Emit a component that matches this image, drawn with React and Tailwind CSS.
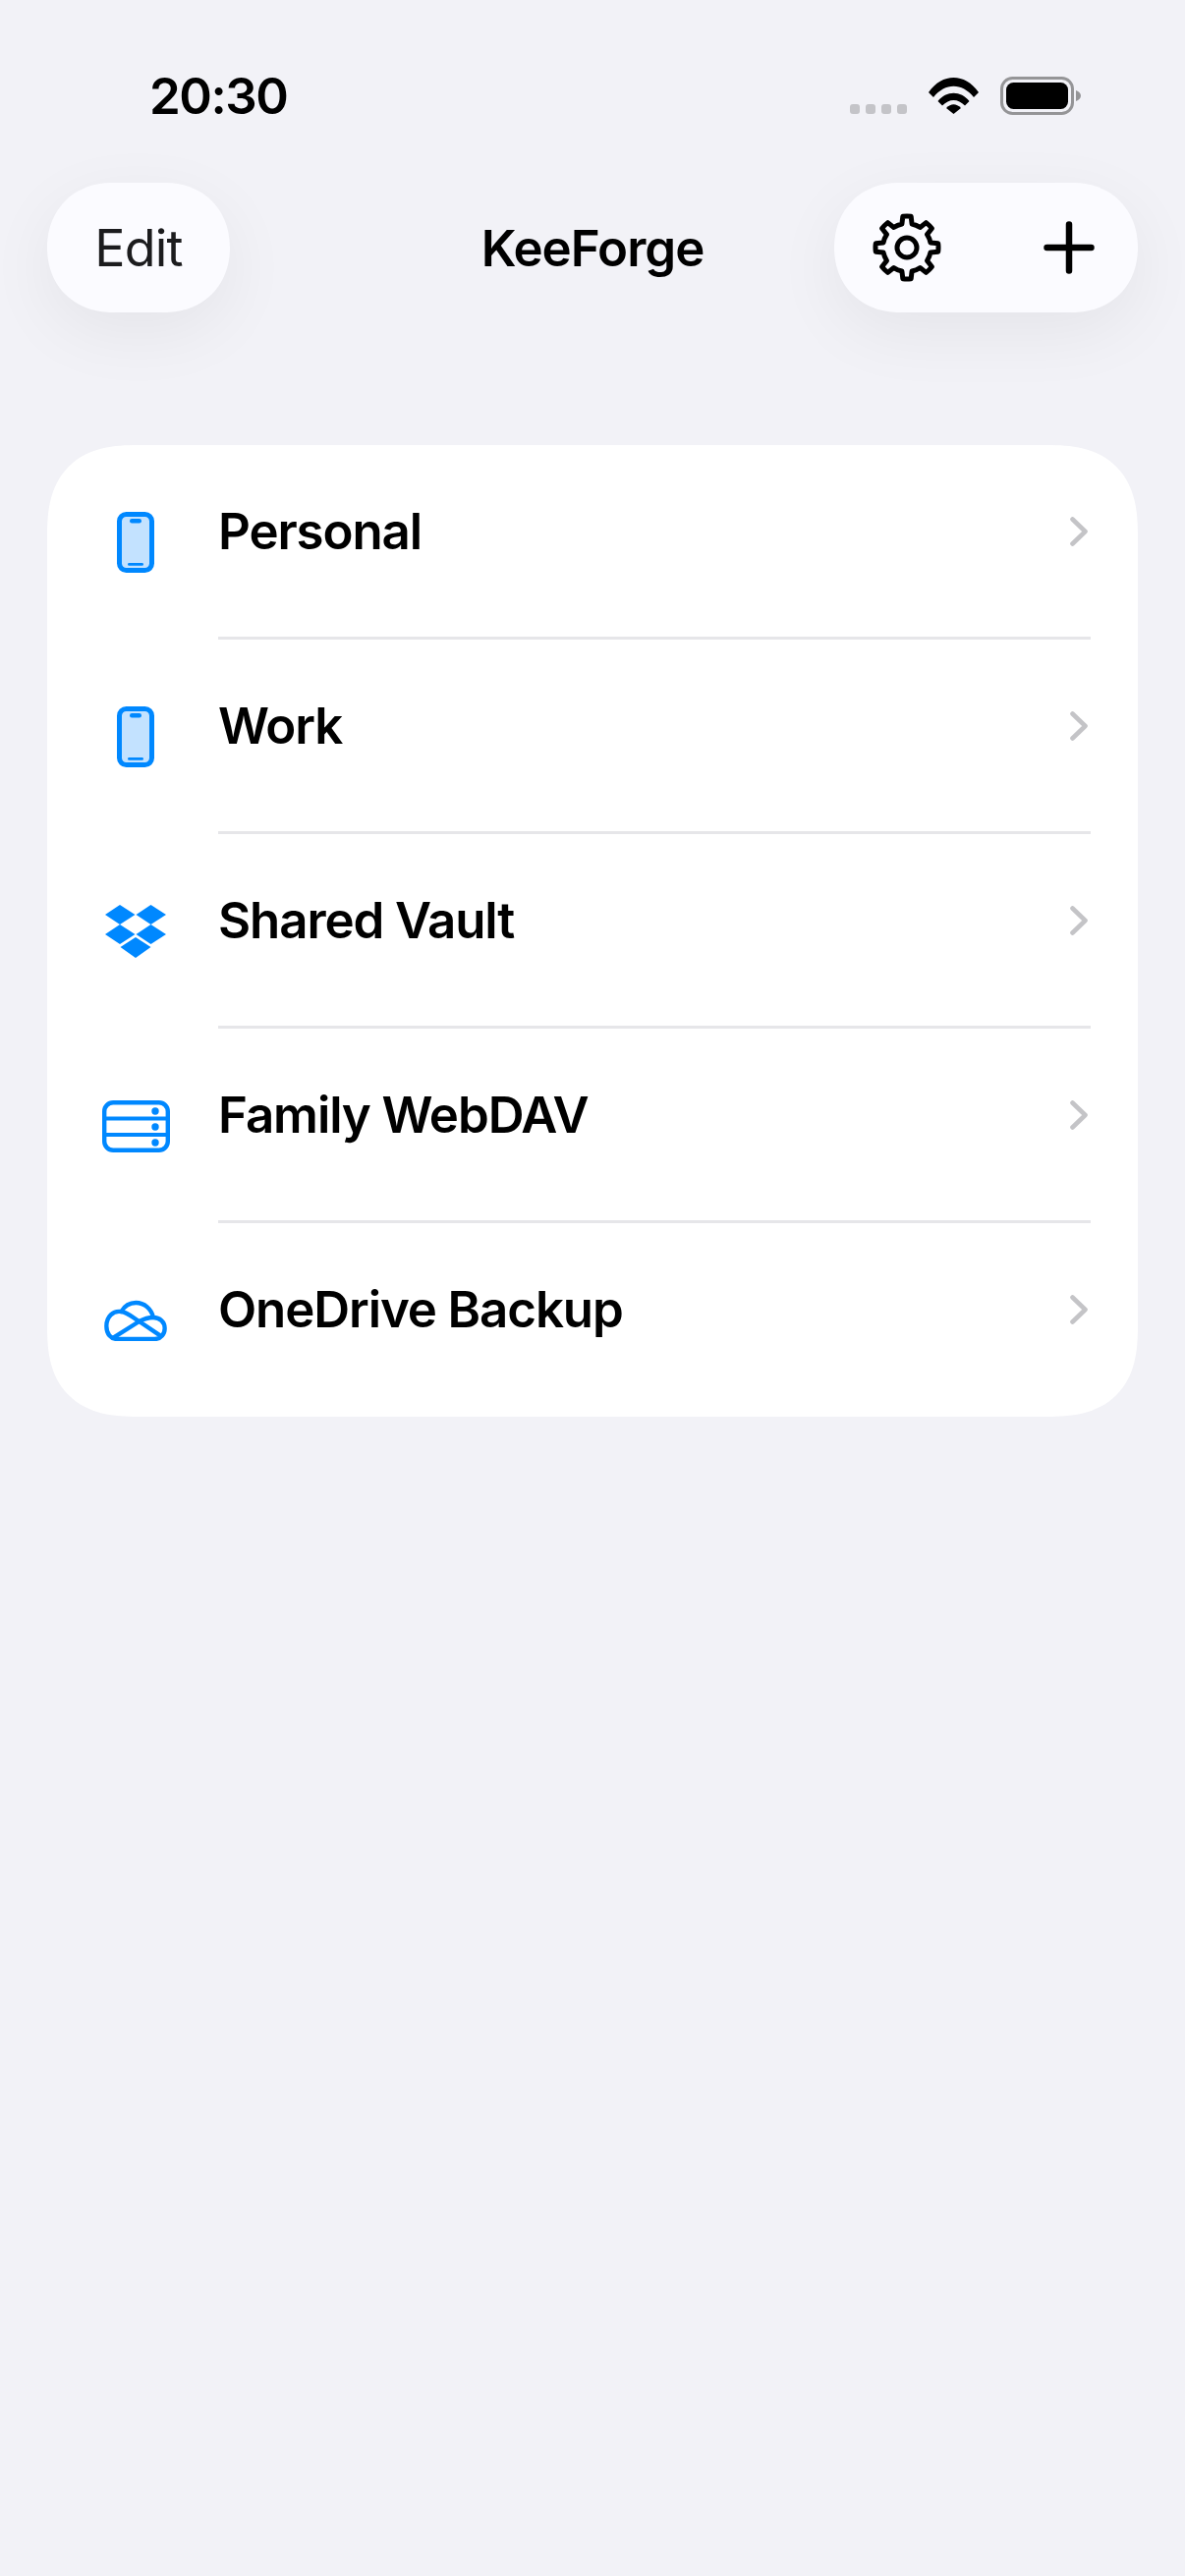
import React from "react";

// gear outline, 8 teeth around (0,0)
function gearPath() {
  const pt = (r, deg) => {
    const a = ((deg - 90) * Math.PI) / 180;
    return `${(r * Math.cos(a)).toFixed(2)} ${(r * Math.sin(a)).toFixed(2)}`;
  };
  let d = "";
  for (let i = 0; i < 8; i++) {
    const a = i * 45;
    d += `${i === 0 ? "M" : "L"}${pt(24.5, a - 12)} `;
    d += `L${pt(32, a - 7.5)} A32 32 0 0 1 ${pt(32, a + 7.5)} `;
    d += `L${pt(24.5, a + 12)} A24.5 24.5 0 0 1 ${pt(24.5, a + 33)} `;
  }
  return d + "Z";
}

function StatusIcons() {
  return (
    <div className="flex items-center gap-[22px]">
      <div className="flex gap-[6px] self-end pb-px">
        <span className="w-[10px] h-[10px] rounded-[3px] bg-[#c4c4c8]" />
        <span className="w-[10px] h-[10px] rounded-[3px] bg-[#c4c4c8]" />
        <span className="w-[10px] h-[10px] rounded-[3px] bg-[#c4c4c8]" />
        <span className="w-[10px] h-[10px] rounded-[3px] bg-[#c4c4c8]" />
      </div>
      <svg width="51" height="37" viewBox="0 0 51 37">
        <path d="M0 15 C14 -5 37 -5 51 15 L46 20 C34 5 17 5 5 20 Z" fill="#000" />
        <path d="M9.5 24 C18 13 33 13 41.5 24 L37 28.5 C30 21 21 21 14 28.5 Z" fill="#000" />
        <path d="M18 31 C23 26 28 26 33 31 L25.5 37 Z" fill="#000" />
      </svg>
      <svg width="82" height="39" viewBox="0 0 82 39">
        <rect x="1.5" y="1.5" width="72" height="36" rx="11" fill="none" stroke="#959597" strokeWidth="3" />
        <rect x="6" y="6" width="63" height="27" rx="7.5" fill="#000" />
        <path d="M77 14 C80 15 82 17 82 19.5 C82 22 80 24 77 25 Z" fill="#959597" />
      </svg>
    </div>
  );
}

function PhoneIcon() {
  return (
    <svg width="38" height="62" viewBox="0 0 38 62">
      <rect x="2.5" y="2.5" width="33" height="57" rx="7" fill="#c3e2ff" stroke="#0088ff" strokeWidth="5" />
      <rect x="13" y="7" width="12" height="4.5" rx="2.2" fill="#0088ff" />
      <rect x="11" y="52" width="16" height="2.8" rx="1.4" fill="#0088ff" />
    </svg>
  );
}

function DropboxIcon() {
  return (
    <svg width="62" height="54" viewBox="107 921 62 54" fill="#0088ff">
      <path d="M122 921 L137.5 931 L122 941 L107 931 Z" />
      <path d="M153.5 921 L169 931 L153.5 941 L138.5 931 Z" />
      <path d="M122 941 L137.5 951 L122 961 L107 951 Z" />
      <path d="M153.5 941 L169 951 L153.5 961 L138.5 951 Z" />
      <path d="M138 954 L153.5 964 L138 975 L122.5 964 Z" />
    </svg>
  );
}

function ServerIcon() {
  return (
    <svg width="69" height="53" viewBox="0 0 69 53">
      <rect x="2.2" y="2.2" width="64.6" height="48.6" rx="9" fill="none" stroke="#0088ff" strokeWidth="4.4" />
      <path d="M2 18.5 H67 M2 35 H67" stroke="#0088ff" strokeWidth="4" />
      <circle cx="54" cy="11" r="3.7" fill="#0088ff" />
      <circle cx="54" cy="27" r="3.7" fill="#0088ff" />
      <circle cx="54" cy="43" r="3.7" fill="#0088ff" />
    </svg>
  );
}

function CloudIcon() {
  return (
    <svg width="64" height="42" viewBox="78 68 192 126" fill="none" stroke="#0088ff" strokeWidth="13" strokeLinecap="round" strokeLinejoin="round">
      <path d="M118 188 H232 C252 188 263 172 263 155 C263 136 248 122 228 122 C222 95 200 77 175 77 C155 77 140 87 130 104 C105 100 85 120 85 148 C85 172 98 188 118 188 Z" />
      <path d="M130 104 C150 106 165 122 185 134 L250 178" />
      <path d="M106 184 L185 134 C198 127 212 122 228 122" />
    </svg>
  );
}

const rows = [
  { name: "Personal", icon: <PhoneIcon /> },
  { name: "Work", icon: <PhoneIcon /> },
  { name: "Shared Vault", icon: <DropboxIcon /> },
  { name: "Family WebDAV", icon: <ServerIcon /> },
  { name: "OneDrive Backup", icon: <CloudIcon /> },
];

export default function App() {
  return (
    <div className="w-[1206px] h-[2622px] bg-[#f2f2f7] font-['Inter',sans-serif] text-black overflow-hidden">
      {/* status bar */}
      <div className="flex items-center justify-between h-[39px] mt-[78px] pl-[152px] pr-[106px]">
        <span className="text-[51px] font-semibold leading-none tracking-[-1.5px]">20:30</span>
        <StatusIcons />
      </div>

      {/* nav */}
      <div className="grid grid-cols-[1fr_auto_1fr] items-center h-[132px] mt-[69px] px-[48px]">
        <div className="flex">
          <button className="w-[186px] h-[132px] rounded-[66px] [corner-shape:superellipse(1.08)] bg-[#fbfbff] shadow-[0_20px_70px_rgba(0,0,0,0.06)] pt-[2px] text-[52px] text-[#1c1c1e] tracking-[-0.8px]">
            Edit
          </button>
        </div>
        <h1 className="text-[51px] font-semibold tracking-[-1px] pt-[2px]">KeeForge</h1>
        <div className="flex justify-end">
          <div className="flex items-center w-[309px] h-[132px] rounded-[66px] [corner-shape:superellipse(1.08)] bg-[#fbfbff] shadow-[0_20px_70px_rgba(0,0,0,0.06)] pl-[39px] gap-[104px]">
            <svg width="70" height="70" viewBox="-35 -35 70 70" fill="none" stroke="#000" strokeWidth="5" strokeLinejoin="round">
              <path d={gearPath()} />
              <circle r="10" />
            </svg>
            <svg width="52" height="54" viewBox="0 0 52 54" stroke="#000" strokeWidth="6.5" strokeLinecap="round">
              <path d="M26 3.5 V50.5 M3.5 27 H48.5" />
            </svg>
          </div>
        </div>
      </div>

      {/* vault list */}
      <div className="mx-[48px] mt-[135px] bg-white rounded-[92px] [corner-shape:superellipse(1.35)] pb-[23px]">
        {rows.map((row, i) => (
          <div key={row.name}>
            {i > 0 && <div className="h-[3px] bg-[#e6e6e9] ml-[174px] mr-[48px] mt-[21px]" />}
            <div className="flex items-center h-[174px] pr-[51px]">
              <div className="w-[174px] flex justify-center pl-[6px] mt-[24px] shrink-0">{row.icon}</div>
              <span className="flex-1 text-[51px] font-semibold tracking-[-1.1px] pt-[2px]">{row.name}</span>
              <svg className="mt-[2px]" width="18" height="30" viewBox="0 0 18 30" fill="none" stroke="#c4c4c7" strokeWidth="4.6" strokeLinecap="round" strokeLinejoin="round">
                <path d="M2.5 2.5 L15.5 15 L2.5 27.5" />
              </svg>
            </div>
          </div>
        ))}
      </div>
    </div>
  );
}
